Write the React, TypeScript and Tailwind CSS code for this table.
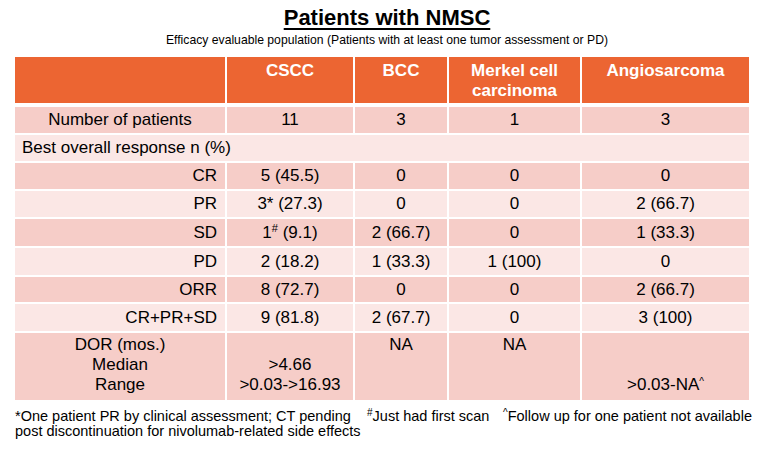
import React from "react";

const DARK = "bg-[#F6CDC8]";
const LIGHT = "bg-[#FBE7E5]";

type RowProps = {
  label: React.ReactNode;
  vals: React.ReactNode[];
  bg: string;
  h: string;
  center?: boolean;
};

function Row({ label, vals, bg, h, center }: RowProps) {
  const widths = ["w-[126px]", "w-[92px]", "w-[131px]", "w-[167px]"];
  return (
    <div className={`flex gap-[2px] ${h}`}>
      <div
        className={`w-[210px] ${bg} flex items-center ${center ? "justify-center" : "justify-end pr-[8px]"}`}
      >
        {label}
      </div>
      {vals.map((v, i) => (
        <div key={i} className={`${widths[i]} ${bg} flex items-center justify-center`}>
          {v}
        </div>
      ))}
    </div>
  );
}

export default function App() {
  return (
    <div
      className="w-[764px] h-[449px] bg-white text-black overflow-hidden"
      style={{ fontFamily: '"Liberation Sans", Arial, sans-serif' }}
    >
      <div className="pt-[5px] pl-[10px] text-center">
        <div className="text-[22px] leading-[25px] font-bold underline decoration-[2px] underline-offset-[3px]">
          Patients with NMSC
        </div>
        <div className="mt-[4px] text-[12.2px] leading-[13px]">
          Efficacy evaluable population (Patients with at least one tumor assessment or PD)
        </div>
      </div>

      <div className="mt-[10px] ml-[15px] w-[734px] flex flex-col gap-[2px] text-[17px] leading-[20px]">
        {/* header */}
        <div className="flex gap-[2px] h-[46px] mb-[2px] text-white font-bold">
          <div className="w-[210px] bg-[#EC6532]" />
          <div className="w-[126px] bg-[#EC6532] pt-[4px] text-center">CSCC</div>
          <div className="w-[92px] bg-[#EC6532] pt-[4px] text-center">BCC</div>
          <div className="w-[131px] bg-[#EC6532] pt-[4px] text-center">
            Merkel cell
            <br />
            carcinoma
          </div>
          <div className="w-[167px] bg-[#EC6532] pt-[4px] text-center">Angiosarcoma</div>
        </div>

        <Row label="Number of patients" vals={["11", "3", "1", "3"]} bg={DARK} h="h-[26px]" center />

        <div className={`h-[26px] ${LIGHT} flex items-center pl-[7px]`}>Best overall response n (%)</div>

        <Row label="CR" vals={["5 (45.5)", "0", "0", "0"]} bg={DARK} h="h-[26px]" />
        <Row label="PR" vals={["3* (27.3)", "0", "0", "2 (66.7)"]} bg={LIGHT} h="h-[26px]" />
        <Row
          label="SD"
          vals={[
            <span key="a">
              1<sup className="text-[11px]">#</sup> (9.1)
            </span>,
            "2 (66.7)",
            "0",
            "1 (33.3)",
          ]}
          bg={DARK}
          h="h-[27px]"
        />
        <Row label="PD" vals={["2 (18.2)", "1 (33.3)", "1 (100)", "0"]} bg={LIGHT} h="h-[27px]" />
        <Row label="ORR" vals={["8 (72.7)", "0", "0", "2 (66.7)"]} bg={DARK} h="h-[25px]" />
        <Row label="CR+PR+SD" vals={["9 (81.8)", "2 (67.7)", "0", "3 (100)"]} bg={LIGHT} h="h-[27px]" />

        {/* DOR */}
        <div className="flex gap-[2px] h-[67px]">
          <div className={`w-[210px] ${DARK} pt-[2px] text-center`}>
            DOR (mos.)
            <br />
            Median
            <br />
            Range
          </div>
          <div className={`w-[126px] ${DARK} pt-[2px] text-center`}>
            &nbsp;
            <br />
            &gt;4.66
            <br />
            &gt;0.03-&gt;16.93
          </div>
          <div className={`w-[92px] ${DARK} pt-[2px] text-center`}>NA</div>
          <div className={`w-[131px] ${DARK} pt-[2px] text-center`}>NA</div>
          <div className={`w-[167px] ${DARK} pt-[2px] text-center`}>
            &nbsp;
            <br />
            &nbsp;
            <br />
            &gt;0.03-NA<sup className="text-[10px]">^</sup>
          </div>
        </div>
      </div>

      <div className="mt-[9px] pl-[15px] flex text-[14.5px] leading-[15px]">
        <div className="w-[352px]">
          *One patient PR by clinical assessment; CT pending
          <br />
          post discontinuation for nivolumab-related side effects
        </div>
        <div className="w-[136px]">
          <sup className="text-[10px]">#</sup>Just had first scan
        </div>
        <div>
          <sup className="text-[10px]">^</sup>Follow up for one patient not available
        </div>
      </div>
    </div>
  );
}
